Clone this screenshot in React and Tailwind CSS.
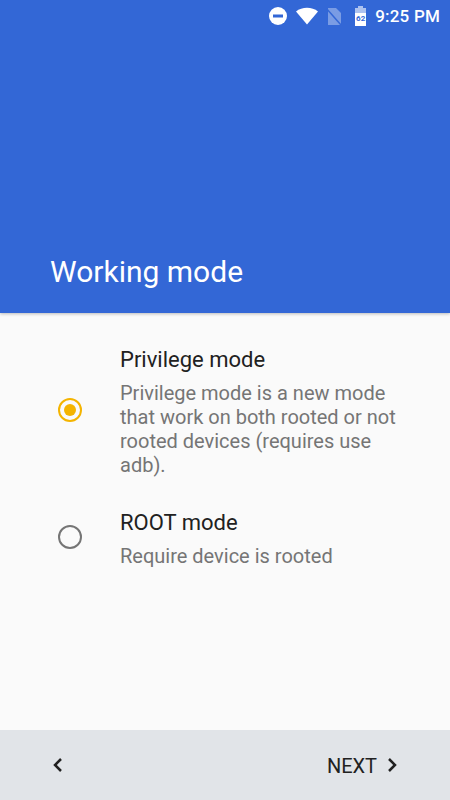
export default function App() {
  const options = [
    {
      title: "Privilege mode",
      description:
        "Privilege mode is a new mode that work on both rooted or not rooted devices (requires use adb).",
      selected: true,
    },
    {
      title: "ROOT mode",
      description: "Require device is rooted",
      selected: false,
    },
  ];

  return (
    <div className="w-[450px] h-[800px] flex flex-col overflow-hidden bg-[#fafafa] font-['Roboto',sans-serif]">
      <div className="h-[313px] bg-[#3367d6] flex flex-col justify-between shrink-0 shadow-[0_1px_3px_rgba(0,0,0,0.25)] z-10">
        <div className="h-8 flex items-center justify-end pr-[10px] text-white">
          <svg width="20" height="20" viewBox="0 0 20 20" className="mr-[7px]">
            <circle cx="10" cy="10" r="9" fill="#fff" />
            <rect x="5" y="8.5" width="10" height="3" fill="#3367d6" />
          </svg>
          <svg width="24" height="18" viewBox="0 0 24 18" className="mr-[6px]">
            <path d="M1 4.5C7 -0.5 17 -0.5 23 4.5L12 17.5Z" fill="#fff" />
          </svg>
          <svg width="18" height="20" viewBox="0 0 18 20" className="mr-[11px]">
            <path d="M3 2h8l5 5v12H3Z" fill="#fff" fillOpacity="0.35" />
            <path d="M1 2l15 17" stroke="#3367d6" strokeWidth="1.5" />
          </svg>
          <div className="relative w-[13px] h-5 mr-2">
            <svg width="13" height="20" viewBox="0 0 13 20">
              <path d="M4 0h5v2h3v18H1V2h3Z" fill="#fff" fillOpacity="0.6" />
              <path d="M1 7h11v13H1Z" fill="#fff" />
            </svg>
            <span className="absolute left-0 right-0 top-[8px] text-center text-[8px] leading-[10px] font-bold text-[#3367d6]">62</span>
          </div>
          <span className="text-[17px] font-medium leading-none tracking-[0.2px]">9:25 PM</span>
        </div>
        <div className="pl-[50px] pb-[22px] text-[30px] leading-[38px] text-white">Working mode</div>
      </div>

      <div className="flex-1 pt-[34px] flex flex-col gap-[33px]">
        {options.map((option) => (
          <div key={option.title} className="flex items-center">
            <div className="w-[120px] pl-[58px] pb-1 shrink-0">
              {option.selected ? (
                <div className="w-6 h-6 rounded-full border-2 border-[#f4b400] flex items-center justify-center">
                  <div className="w-3 h-3 rounded-full bg-[#f4b400]" />
                </div>
              ) : (
                <div className="w-6 h-6 rounded-full border-2 border-[#757575]" />
              )}
            </div>
            <div className="pr-[50px]">
              <div className="text-[22px] leading-[26px] text-[#212121]">{option.title}</div>
              <div className="mt-2 text-[20px] leading-[24px] text-[#757575]">{option.description}</div>
            </div>
          </div>
        ))}
      </div>

      <div className="h-[70px] bg-[#e1e4e8] flex items-center justify-between pl-[50px] pr-[50px] shrink-0 text-[#212121]">
        <svg width="14" height="18" viewBox="0 0 14 18" fill="none" stroke="#212121" strokeWidth="2.5">
          <path d="M11 3L5 9l6 6" />
        </svg>
        <div className="flex items-center gap-[9px]">
          <span className="text-[20px] leading-none pt-px">NEXT</span>
          <svg width="14" height="18" viewBox="0 0 14 18" fill="none" stroke="#212121" strokeWidth="2.5">
            <path d="M3 3l6 6-6 6" />
          </svg>
        </div>
      </div>
    </div>
  );
}
